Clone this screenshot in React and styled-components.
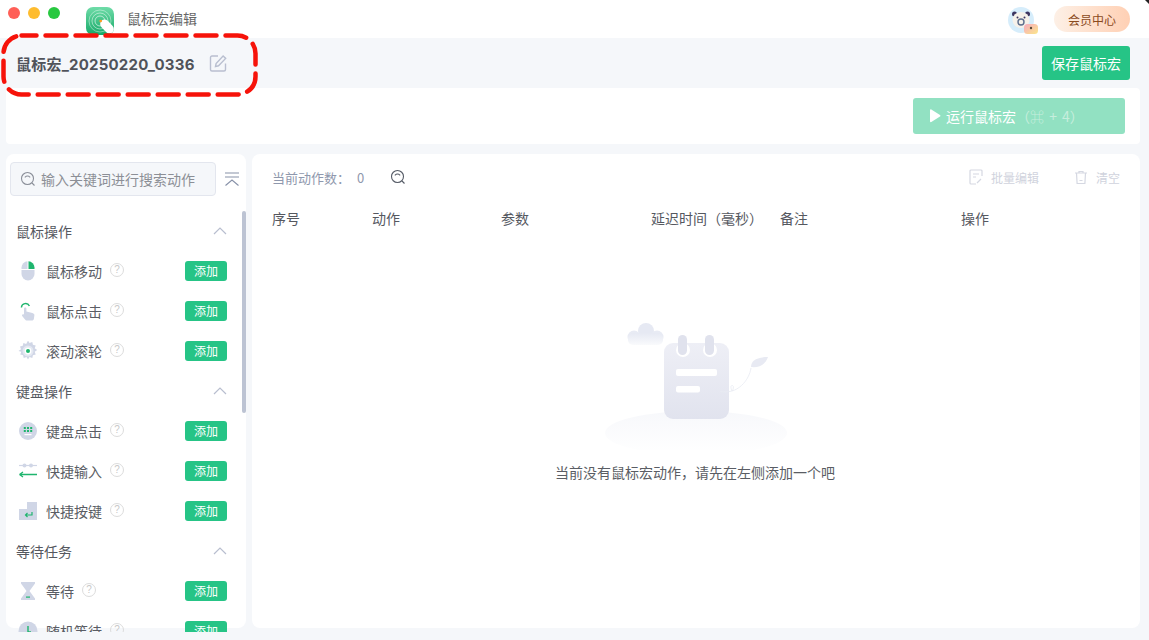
import styled, { createGlobalStyle } from "styled-components";
import { Fragment } from "react";

const GlobalStyle = createGlobalStyle`
  html, body {
    margin: 0;
    padding: 0;
    background: #f5f7fa;
    overflow: hidden;
  }
  * {
    box-sizing: border-box;
  }
  #root {
    font-family: "Noto Sans CJK SC", "Liberation Sans", sans-serif;
  }
`;

// icons for the action list, blue-grey body with a green accent
const MouseIcon = () => (
  <svg width="20" height="20" viewBox="0 0 20 20">
    <path d="M3.500 8V6.500A6.500 6.500 0 0 1 9.500 .3V8z" fill="#d0d6e6" />
    <path d="M10.500 .3A6.500 6.500 0 0 1 16.500 6.500V8h-6z" fill="#1fb56e" />
    <path d="M3.500 9h13v4a6.500 6.500 0 0 1-13 0z" fill="#d0d6e6" />
  </svg>
);
const ClickIcon = () => (
  <svg width="20" height="20" viewBox="0 0 20 20">
    <path d="M3.400 6.500A4.200 4.200 0 0 1 11.400 5" fill="none" stroke="#1fb56e" strokeWidth="1.400" />
    <path d="M6 7.500c0-1.500 2.400-1.500 2.400 0V10.500l6 1.400c1.400.4 2.200 1.300 2 2.400l-.5 3.400c-.1 1-1 1.800-2 1.800H9c-1 0-1.600-.4-2.200-1.200L4.200 15c-.7-1.300.6-2.300 1.800-1.400z" fill="#d0d6e6" />
  </svg>
);
const WheelIcon = () => (
  <svg width="20" height="20" viewBox="0 0 20 20">
    <path d="M10 .5l1.500 2.500 2.800-1 .6 2.800 2.800.6-1 2.800 2.500 1.800-2.500 1.800 1 2.800-2.800.6-.6 2.800-2.800-1L10 19.500l-1.500-2.500-2.800 1-.6-2.800-2.800-.6 1-2.800L.5 11l2.500-1.800-1-2.800 2.800-.6.6-2.800 2.800 1z" fill="#d0d6e6" transform="translate(0 -1)" />
    <circle cx="10" cy="10" r="5.500" fill="#e4e8f2" />
    <circle cx="10" cy="10" r="3.400" fill="#fff" />
    <circle cx="10" cy="10" r="2" fill="#1fb56e" />
  </svg>
);
const KeypadIcon = () => (
  <svg width="20" height="20" viewBox="0 0 20 20">
    <circle cx="10" cy="10" r="9" fill="#d0d6e6" />
    {[5.800, 9, 12.200].map((x) =>
      [6, 9].map((y) => <rect key={`${x}-${y}`} x={x} y={y} width="2" height="2" fill="#1fb56e" />)
    )}
    <rect x="6.500" y="13" width="7" height="1.200" fill="#fff" />
  </svg>
);
const TypeIcon = () => (
  <svg width="20" height="20" viewBox="0 0 20 20">
    <path d="M1 4.500h18" stroke="#d0d6e6" strokeWidth="1.200" />
    <circle cx="6.500" cy="4.500" r="2" fill="#d0d6e6" />
    <circle cx="13" cy="4.500" r="2" fill="#d0d6e6" />
    <path d="M1.500 13.500h17.500M1.500 13.500l3.500-2.500M1.500 13.500l3.500 2.500" stroke="#1fb56e" strokeWidth="1.300" fill="none" />
  </svg>
);
const HotkeyIcon = () => (
  <svg width="20" height="20" viewBox="0 0 20 20">
    <path d="M9 1h10v18H1V8h8z" fill="#d0d6e6" />
    <path d="M14 11v3H7.500M9.500 12l-2 2 2 2" stroke="#1fb56e" strokeWidth="1.200" fill="none" />
  </svg>
);
const WaitIcon = () => (
  <svg width="20" height="20" viewBox="0 0 20 20">
    <path d="M3 1h14v1.500L11.500 10 17 17.500V19H3v-1.500L8.500 10 3 2.500z" fill="#d0d6e6" />
    <rect x="8" y="15.500" width="4" height="1.200" fill="#1fb56e" />
  </svg>
);
const RandomIcon = () => (
  <svg width="20" height="20" viewBox="0 0 20 20">
    <circle cx="10" cy="10" r="9.500" fill="#d0d6e6" />
    <path d="M10 5v6h3" stroke="#1fb56e" strokeWidth="1.400" fill="none" />
  </svg>
);

const SearchIcon = ({ color = "#8b8f99", size = 16 }) => (
  <svg width={size} height={size} viewBox="0 0 16 16" fill="none" stroke={color} strokeWidth="1.100">
    <circle cx="7.500" cy="7.500" r="6" />
    <path d="M4.800 6.300c1.500-1.400 3.900-1.400 5.400 0M12 12l2.500 2.500" />
  </svg>
);

const groups = [
  {
    title: "鼠标操作",
    items: [
      { name: "鼠标移动", icon: MouseIcon },
      { name: "鼠标点击", icon: ClickIcon },
      { name: "滚动滚轮", icon: WheelIcon },
    ],
  },
  {
    title: "键盘操作",
    items: [
      { name: "键盘点击", icon: KeypadIcon },
      { name: "快捷输入", icon: TypeIcon },
      { name: "快捷按键", icon: HotkeyIcon },
    ],
  },
  {
    title: "等待任务",
    items: [
      { name: "等待", icon: WaitIcon },
      { name: "随机等待", icon: RandomIcon },
    ],
  },
];

const columns = [
  { label: "序号", width: 100 },
  { label: "动作", width: 129 },
  { label: "参数", width: 150 },
  { label: "延迟时间（毫秒）", width: 129 },
  { label: "备注", width: 181 },
  { label: "操作", width: 60 },
];

const EmptyArt = () => (
  <svg width="210" height="140" viewBox="0 0 210 140">
    <defs>
      <linearGradient id="hill" x1="0" y1="0" x2="0" y2="1">
        <stop offset="0" stopColor="#f7f8fb" />
        <stop offset="1" stopColor="#ffffff" />
      </linearGradient>
      <linearGradient id="cloud" x1="0" y1="0" x2="0" y2="1">
        <stop offset="0" stopColor="#e6e9f3" />
        <stop offset="1" stopColor="#f9fafc" />
      </linearGradient>
      <linearGradient id="pad" x1="0" y1="0" x2="0" y2="1">
        <stop offset="0" stopColor="#eeeff6" />
        <stop offset="1" stopColor="#e1e3ee" />
      </linearGradient>
    </defs>
    <ellipse cx="106" cy="123" rx="91" ry="22" fill="url(#hill)" />
    <circle cx="56" cy="21" r="8" fill="#e6e9f3" />
    <circle cx="44" cy="27" r="6.500" fill="#e8ebf4" />
    <circle cx="67" cy="27" r="6.500" fill="#e8ebf4" />
    <rect x="38" y="23" width="35" height="12" rx="5" fill="url(#cloud)" />
    <rect x="74" y="33" width="65" height="76" rx="9" fill="url(#pad)" />
    <circle cx="93" cy="40" r="7" fill="#fff" />
    <circle cx="120" cy="40" r="7" fill="#fff" />
    <rect x="88" y="25" width="9" height="20" rx="4.500" fill="#e0e2ed" />
    <rect x="115" y="25" width="9" height="20" rx="4.500" fill="#e0e2ed" />
    <rect x="86" y="59" width="41" height="7" rx="2" fill="#fff" />
    <rect x="86" y="76" width="24" height="6.500" rx="2" fill="#fff" />
    <path d="M130 81.500c4 .5 8 .5 12-.5-2-4-1-6 .5-5.500s1 4-.5 5.500c7-2 13-8 16-14 1.500-3 2.500-6 3-9" fill="none" stroke="#e9ebf2" strokeWidth=".8" />
    <path d="M161 57c0-6 5-10 17-10-2 6-7 11-17 10z" fill="#e8eaf3" />
  </svg>
);

const App = () => {
  return (
    <Page>
      <GlobalStyle />
      <TitleBar>
        <Lights>
          <Light color="#ff5f57" />
          <Light color="#febc2e" />
          <Light color="#28c840" />
        </Lights>
        <AppLogo>
          <svg width="30" height="30" viewBox="0 0 30 30">
            <defs>
              <linearGradient id="logo" x1="0" y1="0" x2="0" y2="1">
                <stop offset="0" stopColor="#6fdca8" />
                <stop offset="1" stopColor="#16a968" />
              </linearGradient>
            </defs>
            <rect width="28" height="28" rx="7" fill="url(#logo)" />
            <circle cx="14" cy="14" r="11" fill="none" stroke="#fff" strokeOpacity=".45" strokeWidth=".9" />
            <circle cx="14" cy="14" r="8" fill="none" stroke="#fff" strokeOpacity=".55" strokeWidth=".9" />
            <circle cx="14" cy="14" r="5" fill="none" stroke="#fff" strokeOpacity=".65" strokeWidth=".9" />
            <rect x="16.500" y="11.500" width="9" height="16" rx="4.500" transform="rotate(-42 21 19.500)" fill="#fff" />
            <circle cx="14.700" cy="14" r="1.300" fill="#ff9d1e" />
          </svg>
        </AppLogo>
        <AppTitle>鼠标宏编辑</AppTitle>
        <Spacer />
        <Avatar>
          <svg width="30" height="28" viewBox="0 0 30 28">
            <defs>
              <linearGradient id="badge" x1="0" y1="0" x2="1" y2="1">
                <stop offset="0" stopColor="#f7a9c0" />
                <stop offset="1" stopColor="#fbe88a" />
              </linearGradient>
            </defs>
            <circle cx="13" cy="13" r="13" fill="#d6edfb" />
            <circle cx="6.500" cy="7" r="2.500" fill="#3c3560" />
            <circle cx="19.500" cy="7" r="2.500" fill="#3c3560" />
            <ellipse cx="13" cy="13" rx="8.500" ry="8" fill="#f6f1ea" />
            <circle cx="9.500" cy="10.500" r="1" fill="#3c3560" />
            <circle cx="16.500" cy="10.500" r="1" fill="#3c3560" />
            <circle cx="13" cy="15" r="3" fill="none" stroke="#5d6e8e" strokeWidth="1.400" />
            <rect x="16" y="17" width="14" height="10" rx="3.500" fill="url(#badge)" />
            <circle cx="23" cy="21" r="1.200" fill="#5b4a3a" />
          </svg>
        </Avatar>
        <VipButton>会员中心</VipButton>
      </TitleBar>

      <NameBar>
        <MacroName>鼠标宏_20250220_0336</MacroName>
        <EditIcon viewBox="0 0 18 18" fill="none" stroke="#b9bfd0" strokeWidth="1.400">
          <path d="M9 2H3a1.500 1.500 0 0 0-1.500 1.500v12A1.500 1.500 0 0 0 3 17h12a1.500 1.500 0 0 0 1.500-1.500V9.500" />
          <path d="M6.500 12.500l.6-3 7-7.500 2.600 2.400-7.200 7.400z" />
        </EditIcon>
        <SaveButton>保存鼠标宏</SaveButton>
      </NameBar>

      <RunBar>
        <RunButton>
          <svg width="12" height="14" viewBox="0 0 12 14">
            <path d="M1 1.200c0-.8.700-1.100 1.300-.8l8.700 5.500c.6.400.6 1.300 0 1.700l-8.700 5.500c-.6.400-1.300 0-1.300-.8z" fill="#fff" />
          </svg>
          运行鼠标宏
          <RunHint>（⌘ + 4）</RunHint>
        </RunButton>
      </RunBar>

      <Workspace>
        <Sidebar>
          <SearchRow>
            <SearchBox>
              <SearchIcon />
              <span>输入关键词进行搜索动作</span>
            </SearchBox>
            <svg width="16" height="16" viewBox="0 0 16 16" fill="none" stroke="#8791a8" strokeWidth="1.100">
              <path d="M1 2h14M1 6h14M1.500 14.500L8 9l6.500 5.500" />
            </svg>
          </SearchRow>
          <ActionList>
            <ScrollThumb />
            {groups.map((group) => (
              <Fragment key={group.title}>
                <GroupHeader>
                  <span>{group.title}</span>
                  <svg width="14" height="8" viewBox="0 0 14 8" fill="none" stroke="#b8becf" strokeWidth="1.200">
                    <path d="M1 7l6-6 6 6" />
                  </svg>
                </GroupHeader>
                {group.items.map((item) => (
                  <ActionRow key={item.name}>
                    <ActionIcon>
                      <item.icon />
                    </ActionIcon>
                    <ActionName>{item.name}</ActionName>
                    <HelpMark>?</HelpMark>
                    <AddButton>添加</AddButton>
                  </ActionRow>
                ))}
              </Fragment>
            ))}
          </ActionList>
        </Sidebar>

        <MainPanel>
          <MainTools>
            <CountLabel>当前动作数：</CountLabel>
            <CountValue>0</CountValue>
            <SearchIcon color="#555b66" />
            <Spacer />
            <GhostAction>
              <svg width="14" height="16" viewBox="0 0 14 16" fill="none" stroke="#d5d8e2" strokeWidth="1.200">
                <path d="M13 7V2a1 1 0 0 0-1-1H2a1 1 0 0 0-1 1v12a1 1 0 0 0 1 1h5" />
                <path d="M4 5h6M4 8h3M8 14l4-4" />
              </svg>
              批量编辑
            </GhostAction>
            <GhostAction>
              <svg width="14" height="15" viewBox="0 0 14 15" fill="none" stroke="#d5d8e2" strokeWidth="1.200">
                <path d="M1 3h12M5 3V1.500h4V3M2.500 3l.6 10.500h7.800L11.500 3M5.500 10.500h3" />
              </svg>
              清空
            </GhostAction>
          </MainTools>
          <TableHead>
            {columns.map((col) => (
              <HeadCell key={col.label} $width={col.width}>{col.label}</HeadCell>
            ))}
          </TableHead>
          <EmptyState>
            <EmptyArt />
            <EmptyText>当前没有鼠标宏动作，请先在左侧添加一个吧</EmptyText>
          </EmptyState>
        </MainPanel>
      </Workspace>

      <Annotation width="260" height="66" viewBox="0 0 260 66">
        <rect x="3.500" y="3.500" width="252" height="59" rx="18" fill="none" stroke="#f6130a" strokeWidth="4.500" strokeLinecap="round" strokeDasharray="21 9" strokeDashoffset="6" />
      </Annotation>
      <WindowCorner width="7" height="4" viewBox="0 0 7 4">
        <path d="M3 0h4v4z" fill="#222" />
      </WindowCorner>
    </Page>
  );
};

export default App;

const Page = styled.div`
  position: relative;
  width: 1149px;
  height: 640px;
  overflow: hidden;
  background: #f5f7fa;
  display: flex;
  flex-direction: column;
`;

const TitleBar = styled.div`
  height: 38px;
  flex: none;
  background: #fff;
  display: flex;
  align-items: center;
  padding: 0 19px 0 8px;
`;

const Lights = styled.div`
  display: flex;
  gap: 8px;
  margin-top: -13px;
`;

const Light = styled.span`
  width: 12px;
  height: 12px;
  border-radius: 50%;
  background: ${(p) => p.color};
`;

const AppLogo = styled.div`
  margin-left: 26px;
  width: 28px;
  height: 30px;
  margin-top: 5px;
`;

const AppTitle = styled.div`
  margin-left: 13px;
  font-size: 14px;
  line-height: 20px;
  color: #666;
  margin-top: -3px;
`;

const Spacer = styled.div`
  flex: 1;
`;

const Avatar = styled.div`
  width: 28px;
  height: 28px;
  margin-right: 18px;
  margin-top: 3px;
`;

const VipButton = styled.div`
  width: 76px;
  height: 26px;
  border-radius: 13px;
  background: linear-gradient(90deg, #fdf0e6, #ffd0b4);
  color: #8a4a1c;
  font-size: 12px;
  display: flex;
  align-items: center;
  justify-content: center;
`;

const NameBar = styled.div`
  height: 50px;
  flex: none;
  display: flex;
  align-items: center;
  padding: 0 19px 0 16px;
`;

const MacroName = styled.div`
  font-size: 15px;
  font-weight: 700;
  letter-spacing: 0.22px;
  color: #50535a;
  font-family: "Inter", "Noto Sans CJK SC", sans-serif;
`;

const EditIcon = styled.svg`
  width: 18px;
  height: 18px;
  margin-left: 14px;
`;

const SaveButton = styled.div`
  margin-left: auto;
  width: 88px;
  height: 34px;
  border-radius: 3px;
  background: #26c486;
  color: #fff;
  font-size: 14px;
  display: flex;
  align-items: center;
  justify-content: center;
`;

const RunBar = styled.div`
  height: 56px;
  flex: none;
  margin: 0 9px 0 6px;
  padding: 10px 15px 0 0;
  background: #fff;
  border-radius: 4px;
  display: flex;
  justify-content: flex-end;
`;

const RunButton = styled.div`
  width: 212px;
  height: 36px;
  border-radius: 3px;
  background: #92e1c2;
  color: #fff;
  font-size: 14px;
  padding-left: 16px;
  display: flex;
  align-items: center;
  gap: 5px;
`;

const RunHint = styled.span`
  color: #c6eedd;
  margin-left: -5px;
  white-space: pre;
  font-size: 14px;
  word-spacing: 2px;
`;

const Workspace = styled.div`
  flex: none;
  height: 474px;
  margin: 10px 9px 0 6px;
  display: flex;
  gap: 6px;
`;

const Sidebar = styled.div`
  width: 240px;
  flex: none;
  background: #fff;
  border-radius: 8px;
  display: flex;
  flex-direction: column;
`;

const SearchRow = styled.div`
  display: flex;
  align-items: center;
  gap: 8px;
  padding: 8px 6px 0 4px;
  height: 42px;
  flex: none;
`;

const SearchBox = styled.div`
  width: 206px;
  height: 34px;
  border: 1px solid #e3e6ee;
  border-radius: 4px;
  background: #f5f7fa;
  color: #8c8f96;
  font-size: 14px;
  display: flex;
  align-items: center;
  gap: 5px;
  padding-left: 9px;
  white-space: nowrap;
  overflow: hidden;
`;

// the list runs a few pixels past the panel's rounded bottom, as in the app
const ActionList = styled.div`
  position: relative;
  height: 436px;
  flex: none;
  overflow: hidden;
  padding: 15px 0 0 10px;
`;

const ScrollThumb = styled.div`
  position: absolute;
  right: 0;
  top: 15px;
  width: 4px;
  height: 202px;
  border-radius: 2px;
  background: #bcc3d3;
`;

const GroupHeader = styled.div`
  height: 40px;
  padding-right: 19px;
  display: flex;
  align-items: center;
  justify-content: space-between;
  font-size: 14px;
  color: #55585f;
`;

const ActionRow = styled.div`
  height: 40px;
  padding-right: 19px;
  display: flex;
  align-items: center;
`;

const ActionIcon = styled.div`
  width: 20px;
  height: 20px;
  margin: 0 8px 0 2px;
  flex: none;
  svg {
    display: block;
  }
`;

const ActionName = styled.div`
  font-size: 14px;
  color: #5a5d64;
  margin-right: 8px;
`;

const HelpMark = styled.span`
  width: 14px;
  height: 14px;
  border: 1px solid #dcdcdc;
  border-radius: 50%;
  color: #c8c8c8;
  font-size: 10px;
  line-height: 12px;
  text-align: center;
  font-family: "Liberation Sans", sans-serif;
  margin-top: -2px;
`;

const AddButton = styled.div`
  margin-left: auto;
  width: 42px;
  height: 20px;
  border-radius: 3px;
  background: #26c486;
  color: #fff;
  font-size: 12px;
  line-height: 18px;
  padding-bottom: 1px;
  display: flex;
  align-items: center;
  justify-content: center;
`;

const MainPanel = styled.div`
  flex: 1;
  background: #fff;
  border-radius: 8px;
  padding: 0 20px;
  display: flex;
  flex-direction: column;
`;

const MainTools = styled.div`
  height: 46px;
  flex: none;
  display: flex;
  align-items: center;
  font-size: 13px;
  color: #8f98ad;
`;

const CountLabel = styled.span`
  margin-right: 7px;
`;

const CountValue = styled.span`
  margin-right: 26px;
`;

const GhostAction = styled.div`
  display: flex;
  align-items: center;
  gap: 8px;
  margin-left: 35px;
  font-size: 12px;
  color: #d0d3dd;
`;

const TableHead = styled.div`
  height: 36px;
  flex: none;
  display: flex;
  align-items: center;
  font-size: 14px;
  color: #55585f;
`;

const HeadCell = styled.div`
  width: ${(p) => p.$width}px;
  flex: none;
  white-space: nowrap;
`;

const EmptyState = styled.div`
  display: flex;
  flex-direction: column;
  align-items: center;
  margin: 74px 2px 0 0;
`;

const EmptyText = styled.div`
  margin-top: 12px;
  font-size: 14px;
  color: #5a5d64;
`;

const Annotation = styled.svg`
  position: absolute;
  left: 0;
  top: 32px;
`;

const WindowCorner = styled.svg`
  position: absolute;
  right: 0;
  top: 0;
`;
